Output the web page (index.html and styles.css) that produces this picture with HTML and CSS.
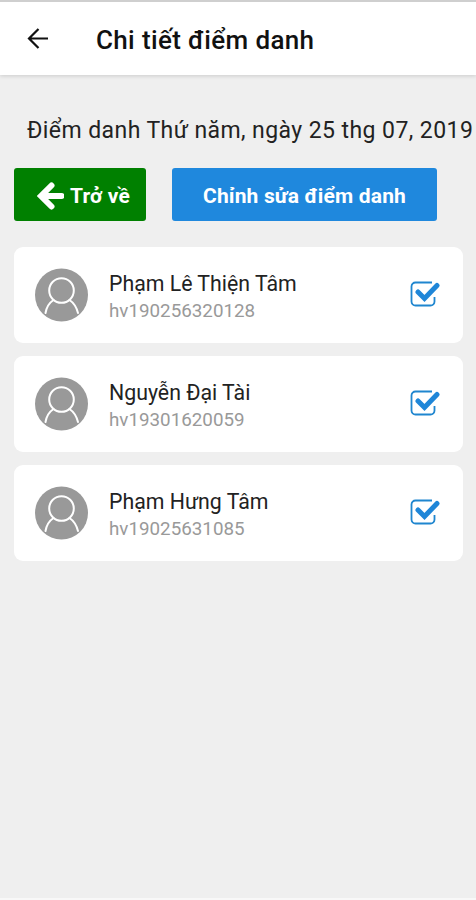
FILE: index.html
```html
<!DOCTYPE html>
<html lang="vi">

<head>
    <meta charset="UTF-8">
    <meta name="viewport" content="width=device-width, initial-scale=1.0">
    <title>Chi tiết điểm danh</title>
    <link rel="stylesheet" href="styles.css">
</head>

<body>
    <svg class="sprite">
        <symbol id="icon-user" viewBox="0 0 54 54">
            <circle cx="26.500" cy="27" r="26.500" fill="#999" />
            <g fill="none" stroke="#fff" stroke-width="2" stroke-linecap="round">
                <circle cx="26.500" cy="22.500" r="12.300" />
                <path d="M18.500 32C14 35 11.500 39 10.500 45M34.500 32C39 35 41.500 39 43 45" />
            </g>
        </symbol>
        <symbol id="icon-check" viewBox="0 0 30 26">
            <path d="M22 1.500H5.500a4 4 0 0 0-4 4v15a4 4 0 0 0 4 4h15a4 4 0 0 0 4-4V16" fill="none" stroke="#1f86cf" stroke-width="1.800" />
            <path d="M8 11l6.500 6.500L27 4.500" fill="none" stroke="#1f86d8" stroke-width="5" stroke-linecap="round" />
        </symbol>
    </svg>

    <div class="header">
        <svg class="back-icon" viewBox="0 0 22 22">
            <path d="M21 10.500H2M11.500 1L2 10.500l9.500 9.500" fill="none" stroke="#111" stroke-width="2.200" />
        </svg>
        <h1>Chi tiết điểm danh</h1>
    </div>

    <div class="content">
        <p class="date">Điểm danh Thứ năm, ngày 25 thg 07, 2019</p>

        <div class="controls">
            <button class="btn-back">
                <svg viewBox="0 0 27 28">
                    <path d="M24.500 14H6M14.500 3.500L4 14l10.500 10.500" fill="none" stroke="#fff" stroke-width="6" stroke-linecap="round" />
                </svg>
                <span>Trở về</span>
            </button>
            <button class="btn-edit"><span>Chỉnh sửa điểm danh</span></button>
        </div>

        <div class="students">
            <div class="student">
                <svg class="avatar"><use href="#icon-user" /></svg>
                <div class="info">
                    <h2>Phạm Lê Thiện Tâm</h2>
                    <p>hv190256320128</p>
                </div>
                <svg class="check"><use href="#icon-check" /></svg>
            </div>
            <div class="student">
                <svg class="avatar"><use href="#icon-user" /></svg>
                <div class="info">
                    <h2>Nguyễn Đại Tài</h2>
                    <p>hv19301620059</p>
                </div>
                <svg class="check"><use href="#icon-check" /></svg>
            </div>
            <div class="student">
                <svg class="avatar"><use href="#icon-user" /></svg>
                <div class="info">
                    <h2>Phạm Hưng Tâm</h2>
                    <p>hv19025631085</p>
                </div>
                <svg class="check"><use href="#icon-check" /></svg>
            </div>
        </div>
    </div>
</body>

</html>
```

FILE: styles.css
```css
* {
    margin: 0px;
    padding: 0px;
    box-sizing: border-box;
}

body {
    font-family: Roboto, "Liberation Sans", sans-serif;
    background: #efefef;
    height: 900px;
    border-bottom: 2px solid #f8f8f8;
    overflow: hidden;
}

.sprite {
    display: none;
}

.header {
    height: 75px;
    background: #fff;
    border-top: 2px solid #cfcfcf;
    box-shadow: 0 1px 4px rgba(0, 0, 0, 0.15);
    display: flex;
    align-items: center;
    padding-left: 27px;
}

.header .back-icon {
    width: 22px;
    height: 22px;
    margin-right: 47px;
}

.header h1 {
    padding-top: 2px;
    font-size: 26px;
    font-weight: 500;
    line-height: 30px;
    letter-spacing: 0.35px;
    color: #111;
    white-space: nowrap;
}

.content {
    padding: 41px 13px 0 14px;
}

.date {
    padding-left: 13px;
    font-size: 23px;
    line-height: 30px;
    letter-spacing: 0.42px;
    color: #222;
    white-space: nowrap;
}

.controls {
    display: flex;
    gap: 26px;
    margin-top: 22px;
}

.controls button {
    height: 53px;
    border: none;
    border-radius: 3px;
    color: #fff;
    font-family: inherit;
    font-size: 21px;
    font-weight: 700;
    letter-spacing: 0.15px;
    white-space: nowrap;
    display: flex;
    align-items: center;
    cursor: pointer;
}

.controls .btn-back {
    width: 132px;
    padding-left: 23px;
    padding-top: 2px;
    gap: 6px;
    background: #008000;
}

.controls .btn-back svg {
    width: 27px;
    height: 28px;
}

.controls .btn-edit {
    width: 265px;
    padding-top: 2px;
    justify-content: center;
    background: #1f88dd;
}

.students {
    display: flex;
    flex-direction: column;
    gap: 13px;
    margin-top: 26px;
}

.student {
    height: 96px;
    padding: 0 23px 0 21px;
    border-radius: 9px;
    background: #fff;
    display: flex;
    align-items: center;
}

.student .avatar {
    width: 54px;
    height: 54px;
    flex-shrink: 0;
}

.student .info {
    flex: 1;
    margin-left: 20px;
    padding-top: 3px;
}

.student .info h2 {
    font-size: 21.3px;
    font-weight: 400;
    line-height: 28px;
    color: #222;
}

.student .info p {
    font-size: 18.8px;
    line-height: 26px;
    color: #999;
}

.student .check {
    width: 30px;
    height: 26px;
    margin-bottom: 2px;
}
```
